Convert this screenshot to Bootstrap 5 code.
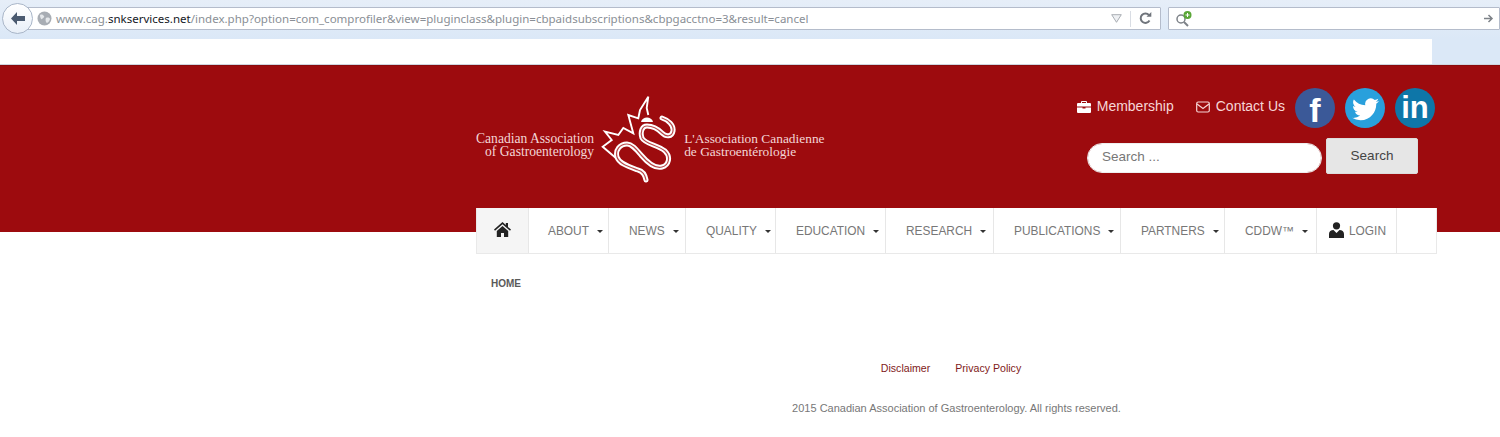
<!DOCTYPE html>
<html lang="en">
<head>
<meta charset="utf-8">
<title>Canadian Association of Gastroenterology</title>
<link rel="stylesheet" href="https://cdn.jsdelivr.net/npm/bootstrap@5.3.0/dist/css/bootstrap.min.css">
<style>
html,body{height:437px;overflow:hidden;background:#fff;font-family:"Liberation Sans",Arial,sans-serif}
.chrome{height:39px;background:linear-gradient(#e6eef8,#dbe8f7);padding:7px 12px 0 17px;gap:7px}
.urlbar,.findbar{height:23px;background:#fff;border:1px solid #b4bccb;border-radius:1px}
.urlbar{width:1144px;padding-left:19px;gap:5px}
.findbar{flex:1;padding:0 5px 0 6px;margin-right:-12px;justify-content:space-between}
.backbtn{position:absolute;left:2px;top:3px;width:31px;height:31px;border-radius:50%;background:linear-gradient(#fff,#e8eff8);border:1px solid #a9b6c8;z-index:2}
.chrome-wrap{position:relative}
.urltext{font:11.52px "Noto Sans",sans-serif;color:#8a8f96;white-space:nowrap;flex:1;margin-left:-1px}
.urltext b{font-weight:400;color:#15191f}
.bar-tools{gap:8px;padding-right:8px}
.sepv{width:1px;height:16px;background:#d9dde4}
.tabstrip{height:26px;background:#dbe8f7;border-bottom:1px solid #cfd6e0}
.tabwhite{width:1432px;height:25px;background:#fff}
.masthead{height:167px;background:#9d0b0e;border-top:1px solid #8a0a0c;padding-left:476px}
.head-inner{width:961px;height:100%}
.brand{padding-top:29px}
.brand-txt{font:13.6px/13px "Liberation Serif",serif;color:#f3d6d6;padding-top:37px;white-space:nowrap}
.brand-left{text-align:right;margin-right:6px}
.brand-right{margin-left:8px;font-size:13.4px}
.head-right{padding:22px 2px 0 0;align-items:flex-end}
.toplinks{gap:10px}
.toplink{color:#f6d6d6;font-size:14px;text-decoration:none;gap:6px;margin-bottom:3px}
.toplink-first{margin-right:12px}
.social{width:40px;height:40px;border-radius:50%;color:#fff;font-weight:700;line-height:1;text-decoration:none}
.s-fb{background:#3b5998;font-size:34px;padding-top:3px}
.s-tw{background:#29a0dc}
.s-in{background:#0e76a8;font-size:31px;padding-bottom:1px}
.searchrow{gap:4px;margin:10px 17px 0 0;align-items:center}
.searchrow .form-control{width:235px;height:30px;border-radius:15px;font-size:13.5px;padding:0 14px 2px;border:1px solid #eee;margin-top:3px}
.searchrow .form-control::placeholder{color:#777}
.searchrow .btn{width:92px;height:36px;border-radius:2px;background:#e6e6e6;border:1px solid #ddd;color:#444;font-size:13.5px;padding:0}
.mainnav{margin:-24px 0 0 476px;width:961px;height:46px;background:#fff;border:1px solid #e9e9e9;border-top:0;position:relative;flex-wrap:nowrap}
.mainnav .nav-link{height:45px;display:flex;align-items:center;color:#777;font-size:11.9px;padding:2px 0 0 20px;border-right:1px solid #e7e7e7;white-space:nowrap}
.mainnav .dropdown-toggle::after{margin-left:8px;border-top-width:3px;border-right-width:3px;border-left-width:3px;color:#333;vertical-align:0}
.n-home{width:52px}.n-home .nav-link{width:52px;background:#f5f5f5;padding:0 1px 3px 0;justify-content:center}
.n1 .nav-link{width:80px;padding-left:19px}.n2 .nav-link{width:77px}.n3 .nav-link{width:90px}.n4 .nav-link{width:110px}
.n5 .nav-link{width:108px}.n6 .nav-link{width:127px}.n7 .nav-link{width:104px}.n8 .nav-link{width:92px}
.n9 .nav-link{width:80px;padding-left:12px;gap:5px}.n9 svg{margin-top:-4px}.n10 .nav-link{width:41px;border-right:0}
.crumb{margin:24px 0 0 491px;font-size:10px;font-weight:700;color:#5a5a5a;line-height:12px}
.foot-links{margin:71px 0 0 476px;padding-right:11px;width:961px;gap:25px;font-size:10.6px;line-height:14px}
.foot-links a{color:#7f1a20;text-decoration:none}
.copy{margin:26px 0 0 476px;width:961px;text-align:center;font-size:11px;line-height:14px;color:#777}
</style>
</head>
<body>
<div class="chrome-wrap">
  <div class="backbtn d-flex align-items-center justify-content-center">
    <svg width="17" height="15" viewBox="0 0 17 15"><path d="M8 1 2 7.500 8 14V10h8V5H8z" fill="#4a5a70"/></svg>
  </div>
  <div class="chrome d-flex">
    <div class="urlbar d-flex align-items-center">
      <svg width="15" height="15" viewBox="0 0 15 15" class="flex-shrink-0"><circle cx="7.500" cy="7.500" r="7" fill="#a8adb4"/><path d="M3 4c2-1 3 0 4 1s-1 2-2 3-2-2-2-4zm6 3c2-1 4 0 4 1s-2 4-3 4-2-4-1-5z" fill="#e4e7ea"/></svg>
      <span class="urltext">www.cag.<b>snkservices.net</b>/index.php?option=com_comprofiler&amp;view=pluginclass&amp;plugin=cbpaidsubscriptions&amp;cbpgacctno=3&amp;result=cancel</span>
      <div class="bar-tools d-flex align-items-center">
        <svg width="11" height="9" viewBox="0 0 11 9"><path d="M.7.7h9.600L5.500 8.300z" fill="#eef0f3" stroke="#a9adb3"/></svg>
        <span class="sepv"></span>
        <svg width="13" height="13" viewBox="0 0 13 13"><path d="M10.500 8.500A4.700 4.700 0 1 1 10 3.200" fill="none" stroke="#70757c" stroke-width="2"/><path d="M7.500 4.800h4.800V0z" fill="#70757c"/></svg>
      </div>
    </div>
    <div class="findbar d-flex align-items-center">
      <svg width="18" height="16" viewBox="0 0 18 16"><circle cx="6" cy="8" r="4" fill="#fff" stroke="#7d8288" stroke-width="1.500"/><path d="M9 11l4 4" stroke="#7d8288" stroke-width="2"/><circle cx="12.500" cy="4" r="4" fill="#5aa637"/><path d="M10.500 4h4M12.500 2v4" stroke="#fff"/></svg>
      <svg width="10" height="9" viewBox="0 0 10 9"><path d="M0 4.500h7M4.500 1l3.500 3.500L4.500 8" fill="none" stroke="#7d8288" stroke-width="1.500"/></svg>
    </div>
  </div>
  <div class="tabstrip"><div class="tabwhite"></div></div>
</div>

<header class="masthead">
  <div class="head-inner d-flex justify-content-between">
    <a class="brand d-flex text-decoration-none" href="#">
      <div class="brand-txt brand-left">Canadian Association<br>of Gastroenterology</div>
      <svg width="76" height="90" viewBox="0 0 76 90" class="flex-shrink-0">
        <path d="M21.700 68 2.700 51.700l9-6.700L5 36.700 18.300 40l5-7 10 5.300-5-18.300 10 3.300L40 15l8.300-13.300L46.700 13l1.600 7" fill="none" stroke="#fff" stroke-width="1.900"/>
        <path d="M41 27c1-6 11-6 12 0z" fill="#fff"/>
        <g fill="none" stroke-linecap="round" stroke-linejoin="round">
          <path d="M62 23C68 25 74 30 73 36 72 42 66 42 62 38 58 34 52 31 47 31 42 31 40 37 42 43 45 49 58 50 65 56 71 62 69 70 62 72 55 74 47 67 41 60 36 54 32 49 27 49 20 49 15 55 17 62 19 69 30 72 38 75 42 76 45 79 46 85" stroke="#fff" stroke-width="5"/>
          <path d="M62 23C68 25 74 30 73 36 72 42 66 42 62 38 58 34 52 31 47 31 42 31 40 37 42 43 45 49 58 50 65 56 71 62 69 70 62 72 55 74 47 67 41 60 36 54 32 49 27 49 20 49 15 55 17 62 19 69 30 72 38 75 42 76 45 79 46 85" stroke="#b8494b" stroke-width="1.200"/>
        </g>
      </svg>
      <div class="brand-txt brand-right">L'Association Canadienne<br>de Gastroentérologie</div>
    </a>
    <div class="head-right d-flex flex-column">
      <div class="toplinks d-flex align-items-center">
        <a class="toplink toplink-first d-inline-flex align-items-center" href="#">
          <svg width="14" height="12" viewBox="0 0 14 12"><path d="M5 0h4a1 1 0 0 1 1 1v1h3a1 1 0 0 1 1 1v2.500H0V3a1 1 0 0 1 1-1h3V1a1 1 0 0 1 1-1zm0 1v1h4V1zM0 6.500h5.500v1h3v-1H14V11a1 1 0 0 1-1 1H1a1 1 0 0 1-1-1z" fill="#fff"/></svg>Membership</a>
        <a class="toplink d-inline-flex align-items-center" href="#">
          <svg width="14" height="12" viewBox="0 0 14 12"><rect x=".7" y="1" width="12.600" height="10" rx="1.500" fill="none" stroke="#f6d6d6" stroke-width="1.200"/><path d="M1 3l6 4.500L13 3" fill="none" stroke="#f6d6d6" stroke-width="1.200"/></svg>Contact Us</a>
        <a class="social s-fb d-flex align-items-center justify-content-center" href="#">f</a>
        <a class="social s-tw d-flex align-items-center justify-content-center" href="#">
          <svg width="27" height="27" viewBox="0 0 16 16"><path fill="#fff" d="M5.026 15c6.038 0 9.341-5.003 9.341-9.334 0-.14 0-.282-.006-.422A6.685 6.685 0 0 0 16 3.542a6.658 6.658 0 0 1-1.889.518 3.301 3.301 0 0 0 1.447-1.817 6.533 6.533 0 0 1-2.087.793A3.286 3.286 0 0 0 7.875 6.030a9.325 9.325 0 0 1-6.767-3.429 3.289 3.289 0 0 0 1.018 4.382A3.323 3.323 0 0 1 .64 6.575v.045a3.288 3.288 0 0 0 2.632 3.218 3.203 3.203 0 0 1-.865.115 3.230 3.230 0 0 1-.614-.057 3.283 3.283 0 0 0 3.067 2.277A6.588 6.588 0 0 1 .78 13.580a6.320 6.320 0 0 1-.78-.045A9.344 9.344 0 0 0 5.026 15z"/></svg>
        </a>
        <a class="social s-in d-flex align-items-center justify-content-center" href="#">in</a>
      </div>
      <form class="searchrow d-flex">
        <input class="form-control" type="text" placeholder="Search ...">
        <button class="btn" type="button">Search</button>
      </form>
    </div>
  </div>
</header>

<ul class="nav mainnav">
  <li class="nav-item n-home"><a class="nav-link" href="#">
    <svg width="17" height="15" viewBox="0 0 17 15"><path d="M8.500 0 0 7.500l1 1.200L8.500 2.200 16 8.700l1-1.200-3-2.600V1h-2.200v2z" fill="#222"/><path d="M2.800 9 8.500 4l5.700 5v6H10v-4H7v4H2.800z" fill="#222"/></svg>
  </a></li>
  <li class="nav-item n1"><a class="nav-link dropdown-toggle" href="#">ABOUT</a></li>
  <li class="nav-item n2"><a class="nav-link dropdown-toggle" href="#">NEWS</a></li>
  <li class="nav-item n3"><a class="nav-link dropdown-toggle" href="#">QUALITY</a></li>
  <li class="nav-item n4"><a class="nav-link dropdown-toggle" href="#">EDUCATION</a></li>
  <li class="nav-item n5"><a class="nav-link dropdown-toggle" href="#">RESEARCH</a></li>
  <li class="nav-item n6"><a class="nav-link dropdown-toggle" href="#">PUBLICATIONS</a></li>
  <li class="nav-item n7"><a class="nav-link dropdown-toggle" href="#">PARTNERS</a></li>
  <li class="nav-item n8"><a class="nav-link dropdown-toggle" href="#">CDDW™</a></li>
  <li class="nav-item n9"><a class="nav-link" href="#">
    <svg width="15" height="16" viewBox="0 0 15 16"><circle cx="7.500" cy="3.800" r="3.600" fill="#222"/><path d="M0 16v-4c0-2.500 2-4 4.500-4L7.500 11 10.500 8C13 8 15 9.500 15 12v4z" fill="#222"/></svg>LOGIN</a></li>
  <li class="nav-item n10"><a class="nav-link" href="#" aria-label="Empty"></a></li>
</ul>

<div class="crumb">HOME</div>
<div class="foot-links d-flex justify-content-center"><a href="#">Disclaimer</a><a href="#">Privacy Policy</a></div>
<div class="copy">2015 Canadian Association of Gastroenterology. All rights reserved.</div>
<script src="https://cdn.jsdelivr.net/npm/bootstrap@5.3.0/dist/js/bootstrap.bundle.min.js"></script>
</body>
</html>
